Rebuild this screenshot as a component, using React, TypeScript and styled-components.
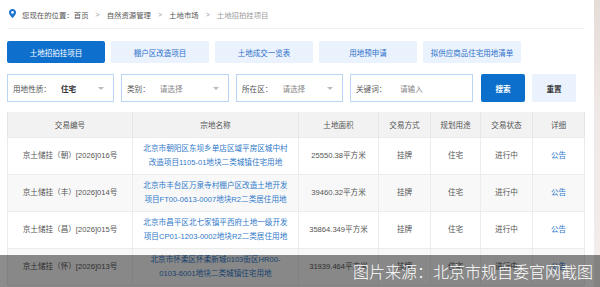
import React from 'react';
import styled, { createGlobalStyle } from 'styled-components';

const GlobalS = createGlobalStyle`
  html, body {
    margin: 0;
    padding: 0;
    background: #fff;
  }
  body {
    font-family: "Liberation Sans", "Noto Sans CJK SC", sans-serif;
    width: 600px;
    height: 287px;
    overflow: hidden;
  }
`;

const tabs = ['土地招拍挂项目', '棚户区改造项目', '土地成交一览表', '用地预申请', '拟供应商品住宅用地清单'];

const rows = [
  {
    code: '京土储挂（朝）[2026]016号',
    name: ['北京市朝阳区东坝乡单店区域平房区城中村', '改造项目1105-01地块二类城镇住宅用地'],
    area: '25550.38平方米',
  },
  {
    code: '京土储挂（丰）[2026]014号',
    name: ['北京市丰台区万泉寺村棚户区改造土地开发', '项目FT00-0613-0007地块R2二类居住用地'],
    area: '39460.32平方米',
  },
  {
    code: '京土储挂（昌）[2026]015号',
    name: ['北京市昌平区北七家镇平西府土地一级开发', '项目CP01-1203-0002地块R2二类居住用地'],
    area: '35864.349平方米',
  },
  {
    code: '京土储挂（怀）[2026]013号',
    name: ['北京市怀柔区怀柔新城0103街区HR00-', '0103-6001地块二类城镇住宅用地'],
    area: '31939.464平方米',
  },
];

const colWidths = [125, 166, 80, 52, 50, 52, 52];
const headers = ['交易编号', '宗地名称', '土地面积', '交易方式', '规划用途', '交易状态', '详细'];

const PinIcon = () => (
  <svg width="7" height="9" viewBox="0 0 14 18">
    <path d="M7 0C3.1 0 0 3 0 6.8 0 11.8 7 18 7 18s7-6.2 7-11.2C14 3 10.9 0 7 0z" fill="#1a73d1" />
    <circle cx="7" cy="6.8" r="2.6" fill="#fff" />
  </svg>
);

export default function App() {
  return (
    <PageS>
      <GlobalS />
      <MainS>
        <CrumbS>
          <PinIcon />
          <span>您现在的位置：</span>
          <CrumbItemS>首页</CrumbItemS>
          <SepS>&gt;</SepS>
          <CrumbItemS>自然资源管理</CrumbItemS>
          <SepS>&gt;</SepS>
          <CrumbItemS>土地市场</CrumbItemS>
          <SepS>&gt;</SepS>
          <CrumbItemS $last>土地招拍挂项目</CrumbItemS>
        </CrumbS>

        <TabsS>
          {tabs.map((t, i) => (
            <TabS key={t} $active={i === 0}>
              {t}
            </TabS>
          ))}
        </TabsS>

        <FiltersS>
          <FieldS $w={107}>
            <LabelS>用地性质：</LabelS>
            <ValueS $filled>住宅</ValueS>
            <CaretS />
          </FieldS>
          <FieldS $w={108}>
            <LabelS>类别：</LabelS>
            <ValueS>请选择</ValueS>
            <CaretS />
          </FieldS>
          <FieldS $w={107}>
            <LabelS>所在区：</LabelS>
            <ValueS>请选择</ValueS>
            <CaretS />
          </FieldS>
          <FieldS $w={123}>
            <LabelS $wide>关键词：</LabelS>
            <ValueS>请输入</ValueS>
          </FieldS>
          <SearchBtnS>搜索</SearchBtnS>
          <ResetBtnS>重置</ResetBtnS>
        </FiltersS>

        <TableS>
          <colgroup>
            {colWidths.map((w, i) => (
              <col key={i} style={{ width: w }} />
            ))}
          </colgroup>
          <thead>
            <tr>
              {headers.map((h) => (
                <ThS key={h}>{h}</ThS>
              ))}
            </tr>
          </thead>
          <tbody>
            {rows.map((r, i) => (
              <RowS key={r.code} $alt={i % 2 === 1}>
                <TdS>{r.code}</TdS>
                <TdS $link>
                  {r.name.map((l) => (
                    <LineS key={l}>{l}</LineS>
                  ))}
                </TdS>
                <TdS>{r.area}</TdS>
                <TdS>挂牌</TdS>
                <TdS>住宅</TdS>
                <TdS>进行中</TdS>
                <TdS $link>公告</TdS>
              </RowS>
            ))}
          </tbody>
        </TableS>
      </MainS>
      <EdgeS />
      <CaptionS>图片来源：北京市规自委官网截图</CaptionS>
    </PageS>
  );
}

const PageS = styled.div`
  position: relative;
  display: flex;
  width: 600px;
  height: 287px;
  overflow: hidden;
`;

const MainS = styled.div`
  width: 594px;
  padding: 0 10px 0 7px;
  box-sizing: border-box;
`;

const EdgeS = styled.div`
  width: 6px;
  background: linear-gradient(to bottom, #e6dcd8, #efe9e7 40%, #f2eeec);
`;

const CrumbS = styled.div`
  display: flex;
  align-items: center;
  height: 29px;
  padding-left: 2px;
  border-bottom: 1px solid #f0f0f0;
  box-sizing: border-box;
  font-size: 7.4px;
  color: #555;
  svg {
    margin-right: 6px;
    margin-top: -1px;
  }
`;

const CrumbItemS = styled.span<{ $last?: boolean }>`
  color: ${(p) => (p.$last ? '#9a9a9a' : '#555')};
`;

const SepS = styled.span`
  color: #999;
  margin: 0 7px;
  font-size: 7px;
`;

const TabsS = styled.div`
  display: flex;
  gap: 6px;
  margin-top: 12px;
`;

const TabS = styled.div<{ $active?: boolean }>`
  width: 98px;
  height: 22px;
  display: flex;
  align-items: center;
  justify-content: center;
  border-radius: 2px;
  font-size: 7.5px;
  background: ${(p) => (p.$active ? '#0e6fcd' : '#eaf2fd')};
  color: ${(p) => (p.$active ? '#fff' : '#2a6fca')};
`;

const FiltersS = styled.div`
  display: flex;
  align-items: center;
  margin-top: 11px;
  height: 28px;
`;

const FieldS = styled.div<{ $w: number }>`
  width: ${(p) => p.$w}px;
  height: 28px;
  box-sizing: border-box;
  border: 1px solid #b9d5f3;
  background: #fff;
  display: flex;
  align-items: center;
  padding: 0 9px 0 5px;
  margin-right: 7px;
  font-size: 7.6px;
`;

const LabelS = styled.span<{ $wide?: boolean }>`
  color: #555;
  width: ${(p) => (p.$wide ? '44px' : 'auto')};
  margin-right: ${(p) => (p.$wide ? '0' : '10px')};
`;

const ValueS = styled.span<{ $filled?: boolean }>`
  flex: 1;
  color: ${(p) => (p.$filled ? '#333' : '#888')};
  font-weight: ${(p) => (p.$filled ? 700 : 400)};
`;

const CaretS = styled.span`
  width: 0;
  height: 0;
  border-left: 3px solid transparent;
  border-right: 3px solid transparent;
  border-top: 3px solid #bbb;
`;

const BtnS = styled.div`
  width: 44px;
  height: 28px;
  display: flex;
  align-items: center;
  justify-content: center;
  border-radius: 2px;
  font-size: 7.6px;
  font-weight: 700;
`;

const SearchBtnS = styled(BtnS)`
  margin-left: 1px;
  background: #0b6fcb;
  color: #fff;
`;

const ResetBtnS = styled(BtnS)`
  margin-left: 7px;
  background: #eaf2fd;
  color: #333;
`;

const TableS = styled.table`
  margin-top: 10px;
  width: 577px;
  table-layout: fixed;
  border-collapse: collapse;
  font-size: 7.6px;
  color: #555;
`;

const ThS = styled.th`
  height: 25px;
  padding: 0;
  background: #f2f2f2;
  font-weight: 400;
  color: #555;
  border-left: 1px solid #e6e6e6;
  border-right: 1px solid #e6e6e6;
`;

const RowS = styled.tr<{ $alt?: boolean }>`
  background: ${(p) => (p.$alt ? '#f8f8f8' : '#fff')};
`;

const TdS = styled.td<{ $link?: boolean }>`
  height: 36px;
  padding: 0;
  text-align: center;
  color: ${(p) => (p.$link ? '#2f78c9' : '#555')};
  border: 1px solid #ececec;
  line-height: 14px;
  white-space: nowrap;
`;

const LineS = styled.span`
  display: block;
`;

const CaptionS = styled.div`
  position: absolute;
  left: 0;
  right: 0;
  bottom: 0;
  height: 32px;
  background: rgba(0, 0, 0, 0.45);
  color: #fff;
  display: flex;
  align-items: center;
  justify-content: flex-end;
  padding-right: 7px;
  font-family: "Noto Sans CJK SC", sans-serif;
  font-size: 16px;
  font-weight: 300;
`;
